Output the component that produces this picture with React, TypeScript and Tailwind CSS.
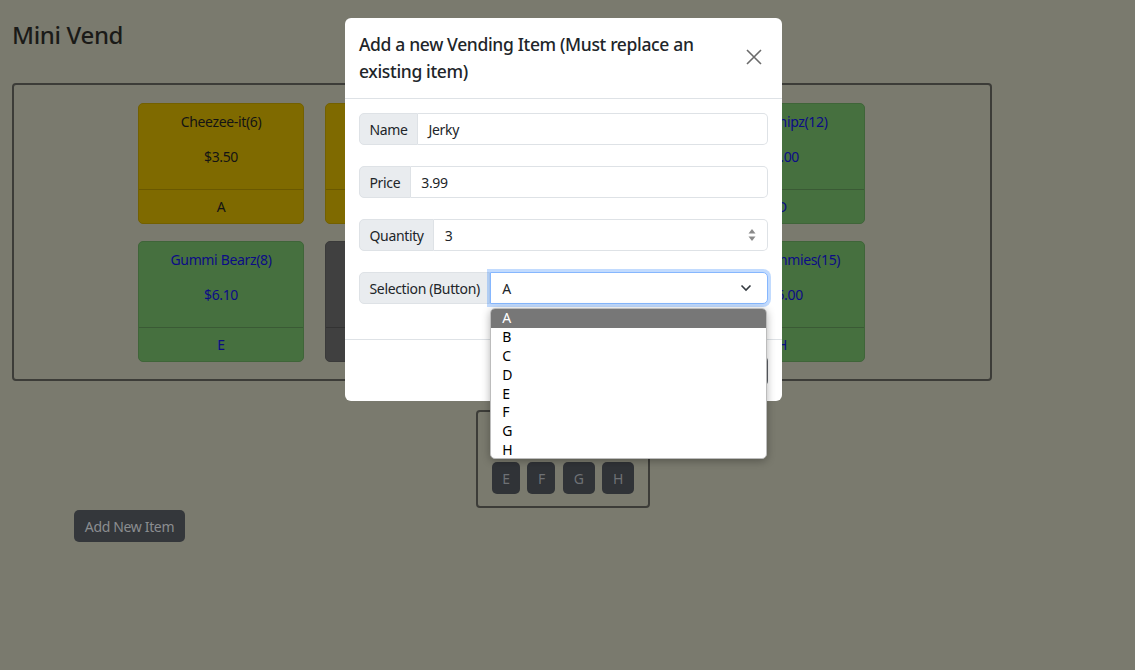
import React from "react";

type Kind = "yellow" | "green" | "gray";

const cards: { name: string; qty: number; price: string; sel: string; kind: Kind }[] = [
  { name: "Cheezee-it", qty: 6, price: "$3.50", sel: "A", kind: "yellow" },
  { name: "Pretzelz", qty: 5, price: "$2.25", sel: "B", kind: "yellow" },
  { name: "Cookiez", qty: 9, price: "$1.75", sel: "C", kind: "green" },
  { name: "Corn Chipz", qty: 12, price: "$2.00", sel: "D", kind: "green" },
  { name: "Gummi Bearz", qty: 8, price: "$6.10", sel: "E", kind: "green" },
  { name: "Empty", qty: 0, price: "$0.00", sel: "F", kind: "gray" },
  { name: "Mintz", qty: 7, price: "$1.25", sel: "G", kind: "green" },
  { name: "Sour Gummies", qty: 15, price: "$15.00", sel: "H", kind: "green" },
];

const cardCls: Record<Kind, string> = {
  yellow: "bg-[#7f6a00] border-[#736000] text-[#141414]",
  green: "bg-[#46703f] border-[#3f6539] text-[#0c0c86]",
  gray: "bg-[#404040] border-[#3a3a3a] text-[#111111]",
};
const lineCls: Record<Kind, string> = {
  yellow: "border-[#6a5800]",
  green: "border-[#3a5a35]",
  gray: "border-[#333333]",
};

function Card({ c }: { c: (typeof cards)[number] }) {
  return (
    <div className={`w-[166px] h-[121px] rounded-[5px] border flex flex-col text-[14px] ${cardCls[c.kind]}`}>
      <div className="h-[85px] flex flex-col items-center pt-[7px]">
        <div className="leading-[21px]">
          {c.name}({c.qty})
        </div>
        <div className="leading-[21px] mt-[14px]">{c.price}</div>
      </div>
      <div className={`flex-1 border-t flex items-center justify-center leading-[21px] ${lineCls[c.kind]}`}>
        {c.sel}
      </div>
    </div>
  );
}

function KeyBtn({ l, w }: { l: string; w: string }) {
  return (
    <div className={`h-[32px] ${w} rounded-[5px] bg-[#303337] text-[#6e7175] text-[14px] flex items-center justify-center`}>
      {l}
    </div>
  );
}

function Group({ label, value, children }: { label: string; value?: string; children?: React.ReactNode }) {
  return (
    <div className="flex h-[32px] mb-[21px] text-[14px] text-[#212529]">
      <div className="px-[9.5px] flex items-center bg-[#e9ecef] border border-[#dee2e6] rounded-l-[5px] whitespace-nowrap">
        {label}
      </div>
      {children ?? (
        <div className="flex-1 flex items-center px-[10.5px] border border-l-0 border-[#dee2e6] rounded-r-[5px] bg-white">
          {value}
        </div>
      )}
    </div>
  );
}

export default function App() {
  const opts = ["A", "B", "C", "D", "E", "F", "G", "H"];
  return (
    <div
      className="w-[1135px] h-[670px] bg-[#7a7a6e] overflow-hidden relative tracking-[-0.35px]"
      style={{ fontFamily: '"Noto Sans", "Open Sans", sans-serif' }}
    >
      <div className="pt-[18px] px-[12px]">
        <h1 className="text-[24px] font-medium leading-[34px] text-[#1a1a18]">Mini Vend</h1>
        <div className="mt-[31px] w-[980px] h-[298px] border-2 border-[#3c3c38] rounded-[4px] flex flex-col pl-[124px] pt-[18px] gap-[17px]">
          <div className="flex gap-[21px]">
            {cards.slice(0, 4).map((c) => (
              <Card key={c.sel} c={c} />
            ))}
          </div>
          <div className="flex gap-[21px]">
            {cards.slice(4).map((c) => (
              <Card key={c.sel} c={c} />
            ))}
          </div>
        </div>
        <div className="ml-[464px] mt-[29px] w-[174px] h-[98px] border-2 border-[#3c3c38] rounded-[4px] px-[14px] pt-[12px] flex flex-col gap-[6px]">
          <div className="flex gap-[7px]">
            <KeyBtn l="A" w="w-[30px]" />
            <KeyBtn l="B" w="w-[30px]" />
            <KeyBtn l="C" w="w-[31px]" />
            <KeyBtn l="D" w="w-[32px]" />
          </div>
          <div className="flex gap-[7.5px]">
            <KeyBtn l="E" w="w-[28px]" />
            <KeyBtn l="F" w="w-[28px]" />
            <KeyBtn l="G" w="w-[32px]" />
            <KeyBtn l="H" w="w-[32px]" />
          </div>
        </div>
        <div className="ml-[62px] mt-[2px] w-[111px] h-[32px] rounded-[5px] bg-[#34373b] text-[#8b8d90] text-[14px] flex items-center justify-center">
          Add New Item
        </div>
      </div>

      {/* Modal */}
      <div className="absolute left-[345px] top-[18px] w-[437px] h-[383px] bg-white rounded-[6px] flex flex-col">
        <div className="flex items-start justify-between px-[14px] pt-[13px] pb-[13px] border-b border-[#dee2e6]">
          <div className="text-[17.5px] font-medium leading-[27px] text-[#212529] w-[360px]">
            Add a new Vending Item (Must replace an existing item)
          </div>
          <svg width="16" height="16" viewBox="0 0 16 16" className="mt-[18px] mr-[6px]">
            <path d="M1 1L15 15M15 1L1 15" stroke="#6b6b6b" strokeWidth="1.6" />
          </svg>
        </div>
        <div className="px-[14px] pt-[14px] pb-[14px]">
          <Group label="Name" value="Jerky" />
          <Group label="Price" value="3.99" />
          <Group label="Quantity">
            <div className="flex-1 flex items-center justify-between pl-[10.5px] pr-[11px] border border-l-0 border-[#dee2e6] rounded-r-[5px] bg-white">
              <span>3</span>
              <svg width="8" height="14" viewBox="0 0 8 14">
                <path d="M4 1L7.5 5.5H0.5Z" fill="#8a8a8a" />
                <path d="M4 13L7.5 8.5H0.5Z" fill="#8a8a8a" />
              </svg>
            </div>
          </Group>
          <Group label="Selection (Button)">
            <div className="flex-1 relative">
              <div className="h-full flex items-center justify-between pl-[11px] pr-[15px] border border-[#86b7fe] rounded-r-[5px] bg-white shadow-[0_0_0_3px_rgba(13,110,253,0.25)]">
                <span>A</span>
                <svg width="12" height="8" viewBox="0 0 12 8">
                  <path d="M1.5 1.5L6 6L10.5 1.5" fill="none" stroke="#343a40" strokeWidth="1.6" />
                </svg>
              </div>
              <div className="absolute left-0 top-[36px] right-[1px] h-[151px] bg-white rounded-[5px] shadow-[0_2px_8px_rgba(0,0,0,0.3)] border border-[#bcbcbc] overflow-hidden z-10 text-[14px] text-black">
                {opts.map((o, i) => (
                  <div
                    key={o}
                    className={`h-[18.9px] leading-[18.9px] pl-[11px] ${i === 0 ? "bg-[#777777] text-white" : ""}`}
                  >
                    {o}
                  </div>
                ))}
              </div>
            </div>
          </Group>
        </div>
        <div className="border-t border-[#dee2e6] flex-1 flex justify-end items-start pt-[16px] px-[14px] gap-[7px]">
          <div className="h-[30px] px-[10px] rounded-[5px] bg-[#6c757d] text-white text-[14px] flex items-center">Close</div>
          <div className="h-[30px] px-[10px] rounded-[5px] bg-[#5c6167] text-white text-[14px] flex items-center">Save</div>
        </div>
      </div>
    </div>
  );
}
